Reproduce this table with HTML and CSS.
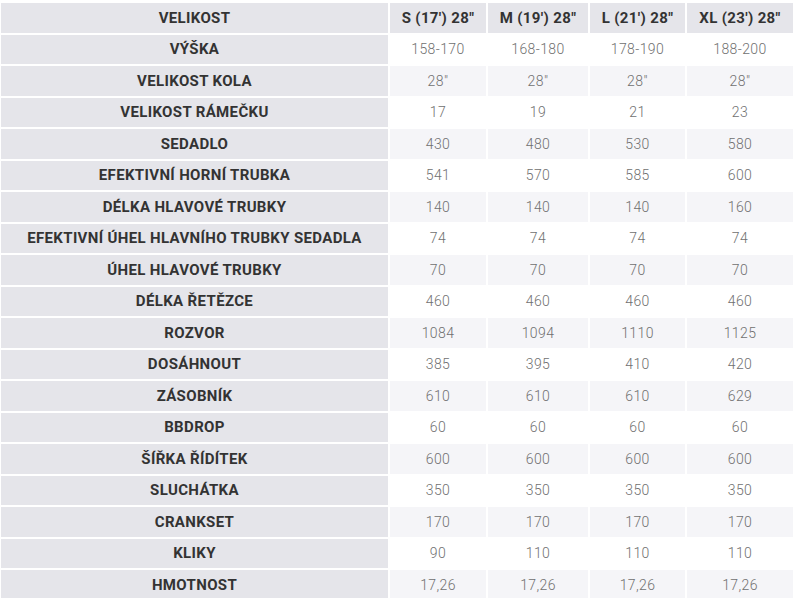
FILE: index.html
```html
<!DOCTYPE html>
<html lang="cs">
<head>
<meta charset="utf-8">
<title>Geometrie</title>
<link rel="stylesheet" href="styles.css">
</head>
<body>
<div class="geo">
  <div class="cell label head">VELIKOST</div><div class="cell head">S (17') 28"</div><div class="cell head">M (19') 28"</div><div class="cell head">L (21') 28"</div><div class="cell head">XL (23') 28"</div>
  <div class="cell label">VÝŠKA</div><div class="cell val odd">158-170</div><div class="cell val odd">168-180</div><div class="cell val odd">178-190</div><div class="cell val odd">188-200</div>
  <div class="cell label">VELIKOST KOLA</div><div class="cell val even">28"</div><div class="cell val even">28"</div><div class="cell val even">28"</div><div class="cell val even">28"</div>
  <div class="cell label">VELIKOST RÁMEČKU</div><div class="cell val odd">17</div><div class="cell val odd">19</div><div class="cell val odd">21</div><div class="cell val odd">23</div>
  <div class="cell label">SEDADLO</div><div class="cell val even">430</div><div class="cell val even">480</div><div class="cell val even">530</div><div class="cell val even">580</div>
  <div class="cell label">EFEKTIVNÍ HORNÍ TRUBKA</div><div class="cell val odd">541</div><div class="cell val odd">570</div><div class="cell val odd">585</div><div class="cell val odd">600</div>
  <div class="cell label">DÉLKA HLAVOVÉ TRUBKY</div><div class="cell val even">140</div><div class="cell val even">140</div><div class="cell val even">140</div><div class="cell val even">160</div>
  <div class="cell label">EFEKTIVNÍ ÚHEL HLAVNÍHO TRUBKY SEDADLA</div><div class="cell val odd">74</div><div class="cell val odd">74</div><div class="cell val odd">74</div><div class="cell val odd">74</div>
  <div class="cell label">ÚHEL HLAVOVÉ TRUBKY</div><div class="cell val even">70</div><div class="cell val even">70</div><div class="cell val even">70</div><div class="cell val even">70</div>
  <div class="cell label">DÉLKA ŘETĚZCE</div><div class="cell val odd">460</div><div class="cell val odd">460</div><div class="cell val odd">460</div><div class="cell val odd">460</div>
  <div class="cell label">ROZVOR</div><div class="cell val even">1084</div><div class="cell val even">1094</div><div class="cell val even">1110</div><div class="cell val even">1125</div>
  <div class="cell label">DOSÁHNOUT</div><div class="cell val odd">385</div><div class="cell val odd">395</div><div class="cell val odd">410</div><div class="cell val odd">420</div>
  <div class="cell label">ZÁSOBNÍK</div><div class="cell val even">610</div><div class="cell val even">610</div><div class="cell val even">610</div><div class="cell val even">629</div>
  <div class="cell label">BBDROP</div><div class="cell val odd">60</div><div class="cell val odd">60</div><div class="cell val odd">60</div><div class="cell val odd">60</div>
  <div class="cell label">ŠÍŘKA ŘÍDÍTEK</div><div class="cell val even">600</div><div class="cell val even">600</div><div class="cell val even">600</div><div class="cell val even">600</div>
  <div class="cell label">SLUCHÁTKA</div><div class="cell val odd">350</div><div class="cell val odd">350</div><div class="cell val odd">350</div><div class="cell val odd">350</div>
  <div class="cell label">CRANKSET</div><div class="cell val even">170</div><div class="cell val even">170</div><div class="cell val even">170</div><div class="cell val even">170</div>
  <div class="cell label">KLIKY</div><div class="cell val odd">90</div><div class="cell val odd">110</div><div class="cell val odd">110</div><div class="cell val odd">110</div>
  <div class="cell label">HMOTNOST</div><div class="cell val even">17,26</div><div class="cell val even">17,26</div><div class="cell val even">17,26</div><div class="cell val even">17,26</div>
</div>
</body>
</html>
```
FILE: styles.css
```css
html, body {
  margin: 0;
  padding: 0;
  background: #ffffff;
}
body {
  font-family: Roboto, "Liberation Sans", sans-serif;
}
.geo {
  display: grid;
  grid-template-columns: 387px 96px 100px 95px 106px;
  grid-auto-rows: 29.5px;
  gap: 2px;
  margin: 3px 0 0 1px;
}
.cell {
  display: flex;
  align-items: center;
  justify-content: center;
  font-size: 14px;
  white-space: nowrap;
}
.label, .head {
  background: #e5e5ea;
  color: #333333;
  font-weight: 700;
  font-size: 15px;
  letter-spacing: 0.35px;
}
.val {
  color: #707070;
  font-weight: 300;
  font-size: 14px;
  letter-spacing: 0.4px;
}
.odd {
  background: #ffffff;
}
.even {
  background: #f5f5f8;
}
```
